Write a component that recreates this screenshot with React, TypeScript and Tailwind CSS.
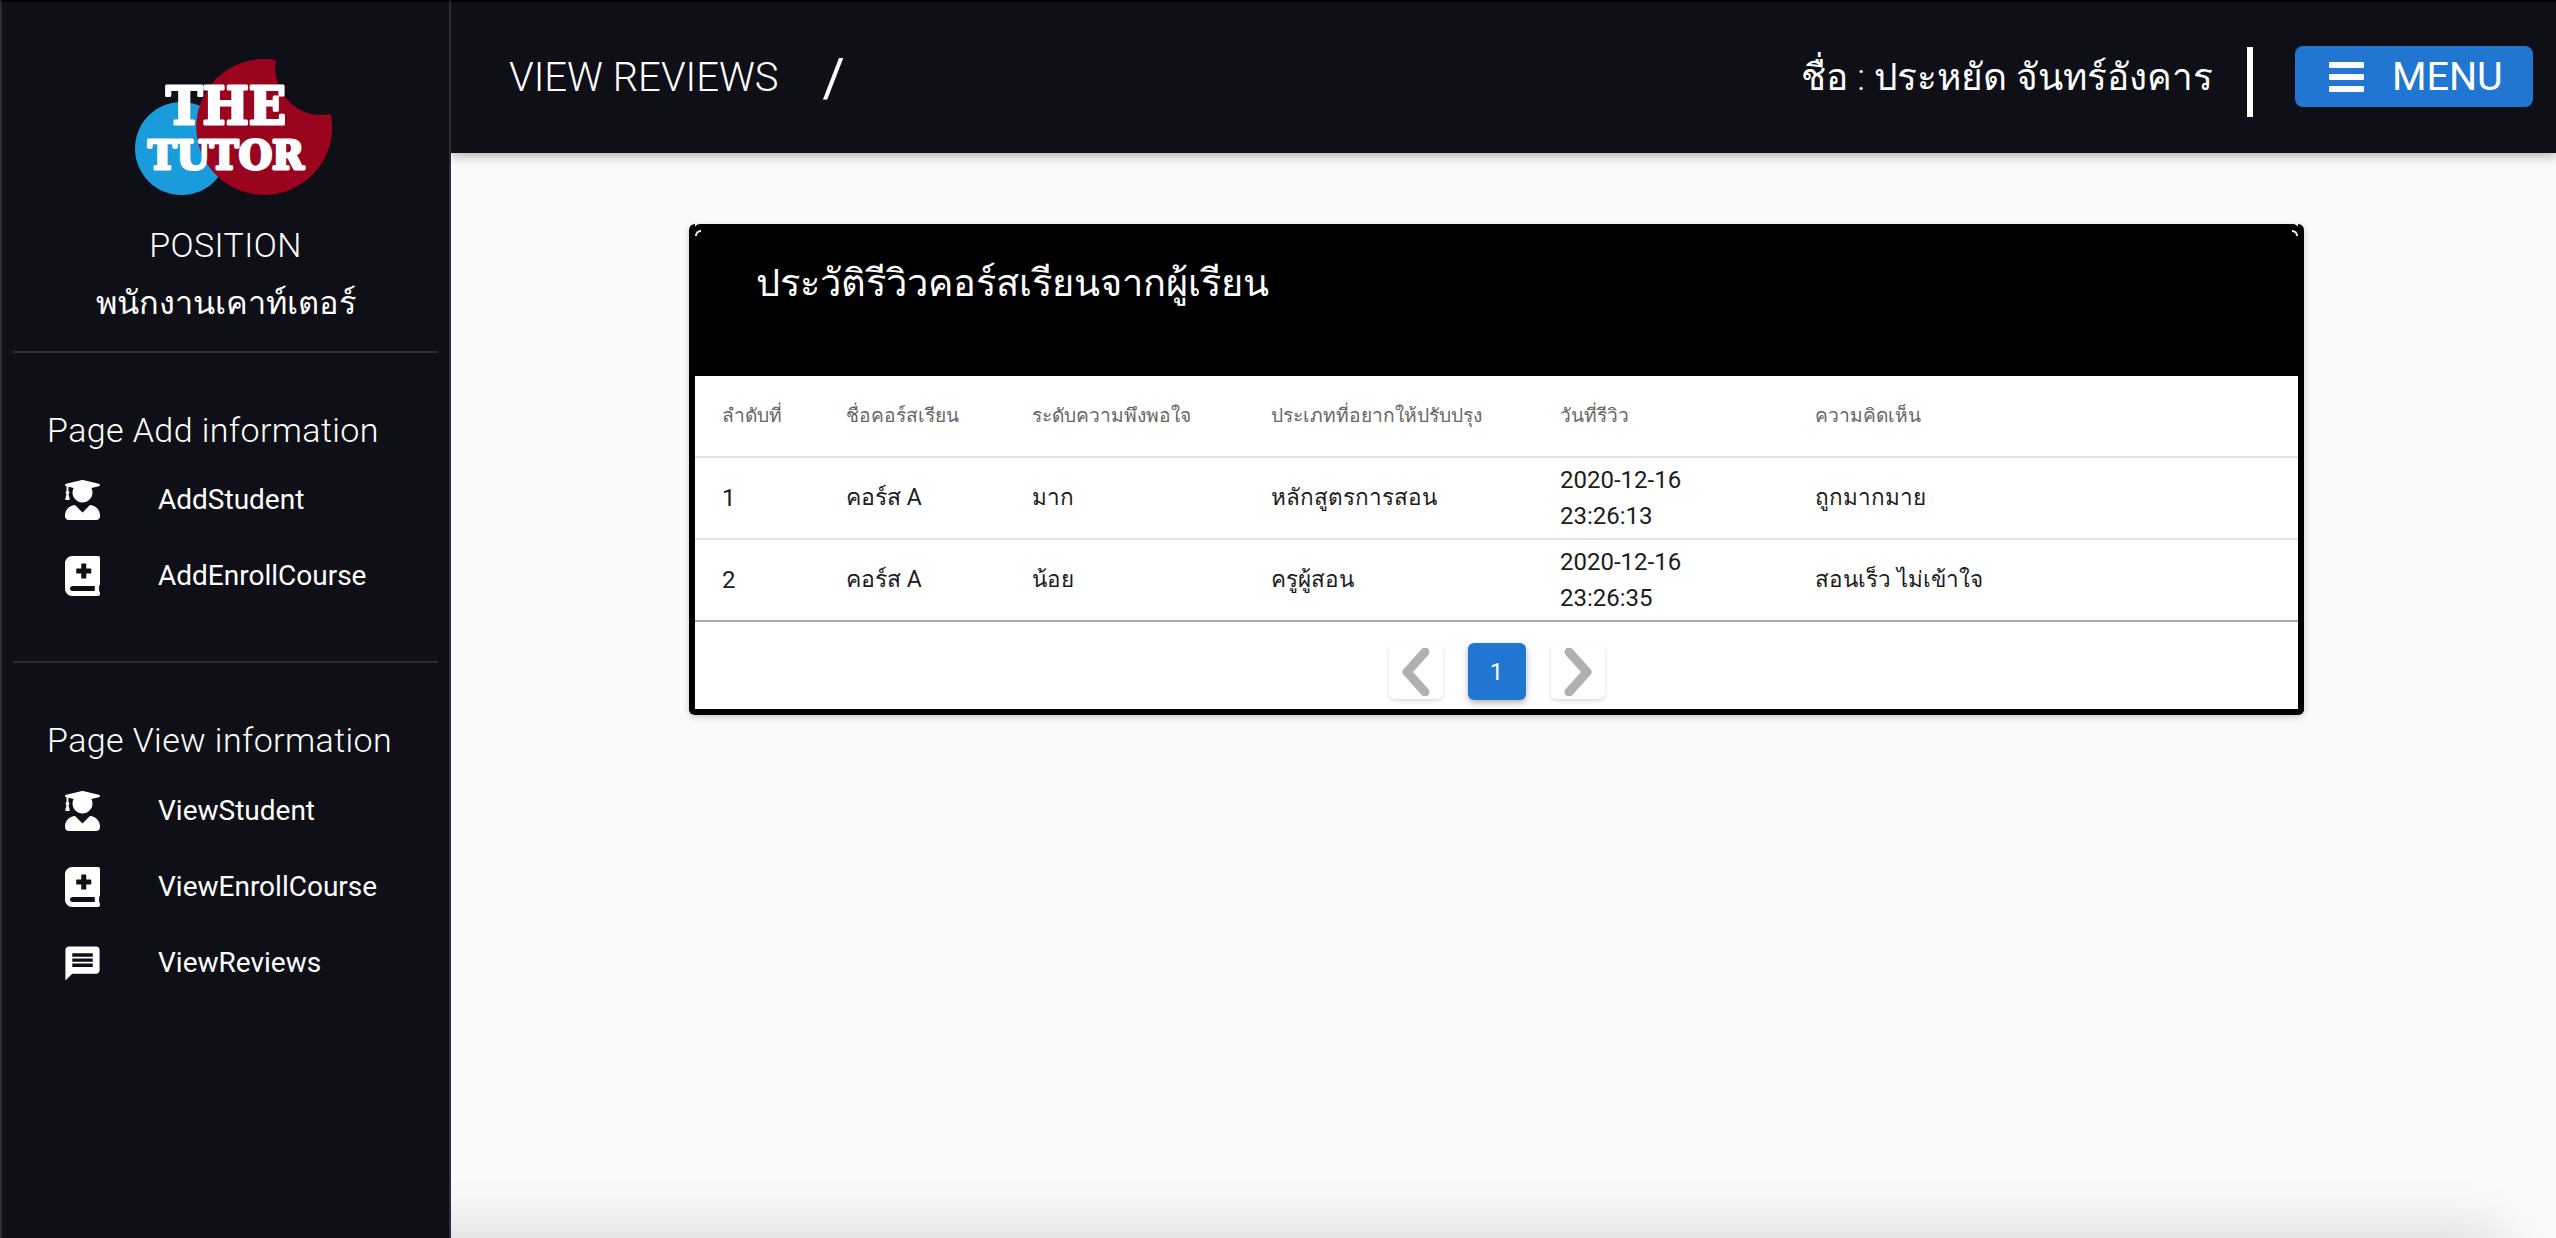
import { FaBookMedical, FaUserGraduate } from 'react-icons/fa'
import { MdMessage } from 'react-icons/md'

const addLinks = [
  { label: 'AddStudent', icon: 'student' },
  { label: 'AddEnrollCourse', icon: 'book' },
]

const viewLinks = [
  { label: 'ViewStudent', icon: 'student' },
  { label: 'ViewEnrollCourse', icon: 'book' },
  { label: 'ViewReviews', icon: 'message' },
]

const reviews = [
  { no: 1, course: 'คอร์ส A', level: 'มาก', type: 'หลักสูตรการสอน', date: '2020-12-16', time: '23:26:13', comment: 'ถูกมากมาย' },
  { no: 2, course: 'คอร์ส A', level: 'น้อย', type: 'ครูผู้สอน', date: '2020-12-16', time: '23:26:35', comment: 'สอนเร็ว ไม่เข้าใจ' },
]

const Logo = () => (
  <svg width="200" height="140" viewBox="0 0 200 140" className="block">
    <circle cx="46.5" cy="91.5" r="46.5" fill="#1a9cdc" />
    <path d="M141 3 A68 68 0 1 0 196 57 C160 64 136 32 141 3 Z" fill="#9b041f" />
    <text x="91" y="67" textAnchor="middle" textLength="120" lengthAdjust="spacingAndGlyphs" fontFamily="'DejaVu Serif', serif" fontWeight="700" fontSize="52" fill="#fff" stroke="#fff" strokeWidth="3" strokeLinejoin="round">THE</text>
    <text x="91" y="112" textAnchor="middle" textLength="156" lengthAdjust="spacingAndGlyphs" fontFamily="'DejaVu Serif', serif" fontWeight="700" fontSize="39" fill="#fff" stroke="#fff" strokeWidth="3" strokeLinejoin="round">TUTOR</text>
  </svg>
)

const NavIcon = ({ name }: { name: string }) => {
  if (name === 'student') return <FaUserGraduate size={40} />
  if (name === 'book') return <FaBookMedical size={40} />
  return <MdMessage size={41} className="shrink-0" />
}

const NavLink = ({ label, icon }: { label: string; icon: string }) => (
  <div className="flex h-[76px] items-center">
    <div className="flex w-[35px] justify-center">
      <NavIcon name={icon} />
    </div>
    <span className="ml-[58px] text-[28px]">{label}</span>
  </div>
)

const Chevron = ({ flip }: { flip?: boolean }) => (
  <svg width="32" height="48" viewBox="0 0 32 48" className={flip ? 'rotate-180' : ''}>
    <path d="M25 4 L7 24 L25 44" fill="none" stroke="#b0b0b0" strokeWidth="9" strokeLinecap="round" strokeLinejoin="round" />
  </svg>
)

export default function App() {
  return (
    <div className="relative flex h-[1238px] w-[2556px] overflow-hidden bg-[#fafafa] font-['Roboto','Noto_Sans_CJK_SC',sans-serif] text-white">
      <aside className="relative z-20 w-[451px] shrink-0 border-x-2 border-t-2 border-x-[#2c2c38] border-t-black bg-[#0f0f17]">
        <div className="flex justify-center pt-[55px] pl-[18px]">
          <Logo />
        </div>
        <div className="mt-[20px] text-center text-[34px] leading-[56px] font-light tracking-[0.4px]">POSITION</div>
        <div className="mt-[2px] text-center text-[32.5px] leading-[56px] font-light">พนักงานเคาท์เตอร์</div>
        <div className="mx-[11px] mt-[20px] h-[2px] bg-[#2c2c38]" />
        <div className="pt-[51px] pl-[45px] text-[34px] leading-[52px] font-light tracking-[0.4px]">Page Add information</div>
        <div className="pl-[63px] pt-[6px]">
          {addLinks.map((l) => (
            <NavLink key={l.label} {...l} />
          ))}
        </div>
        <div className="mx-[11px] mt-[47px] h-[2px] bg-[#2c2c38]" />
        <div className="pt-[51px] pl-[45px] text-[34px] leading-[52px] font-light tracking-[0.4px]">Page View information</div>
        <div className="pl-[63px] pt-[7px]">
          {viewLinks.map((l) => (
            <NavLink key={l.label} {...l} />
          ))}
        </div>
      </aside>

      <div className="flex min-w-0 flex-1 flex-col">
        <header className="z-10 flex h-[153px] items-center border-t-2 border-black bg-[#0f0f17] pr-[23px] pl-[58px] shadow-[0_3px_10px_rgba(0,0,0,0.3)]">
          <span className="text-[40px] font-light">VIEW REVIEWS</span>
          <span className="ml-[44px] text-[54px] font-normal">/</span>
          <span className="ml-auto text-[37px] font-light">ชื่อ : ประหยัด จันทร์อังคาร</span>
          <div className="mt-[8px] ml-[34px] h-[70px] w-[6px] bg-white" />
          <button className="mb-[2px] ml-[42px] flex h-[61px] w-[238px] items-center rounded-lg bg-[#2176d2] pl-[34px] text-[39.5px]">
            <span className="flex h-[30px] w-[35px] flex-col justify-between">
              <span className="h-[6px] rounded-[1px] bg-white" />
              <span className="h-[6px] rounded-[1px] bg-white" />
              <span className="h-[6px] rounded-[1px] bg-white" />
            </span>
            <span className="ml-[28px]">MENU</span>
          </button>
        </header>

        <main className="pt-[71px] pl-[238px]">
          <div className="w-[1615px] rounded-md border-x-[6px] border-b-[6px] border-black bg-white shadow-[0_2px_6px_rgba(0,0,0,0.2)]">
            <div className="relative -mx-[1px] h-[152px] rounded-t-md bg-black pt-[31px] pl-[62px] text-[38px] leading-[56px]">
              <span className="absolute top-[6px] left-[1px] h-[6px] w-[6px] rounded-tl-[6px] border-t-2 border-l-2 border-white" />
              <span className="absolute top-[6px] right-[1px] h-[6px] w-[6px] rounded-tr-[6px] border-t-2 border-r-2 border-white" />
              ประวัติรีวิวคอร์สเรียนจากผู้เรียน
            </div>
            <table className="w-full table-fixed border-collapse text-left text-[24px] text-[#1c1c1c]">
              <colgroup>
                <col className="w-[151px]" />
                <col className="w-[186px]" />
                <col className="w-[239px]" />
                <col className="w-[289px]" />
                <col className="w-[255px]" />
                <col />
              </colgroup>
              <thead>
                <tr className="h-[81px] border-b-2 border-[#e4e4e4] text-[19.2px] text-[#666666]">
                  <th className="pl-[27px] font-medium">ลำดับที่</th>
                  <th className="font-medium">ชื่อคอร์สเรียน</th>
                  <th className="font-medium">ระดับความพึงพอใจ</th>
                  <th className="font-medium">ประเภทที่อยากให้ปรับปรุง</th>
                  <th className="font-medium">วันที่รีวิว</th>
                  <th className="font-medium">ความคิดเห็น</th>
                </tr>
              </thead>
              <tbody>
                {reviews.map((r) => (
                  <tr key={r.no} className="h-[82px] border-b-2 border-[#e4e4e4] last:border-[#a8a8a8]">
                    <td className="pl-[27px]">{r.no}</td>
                    <td className="text-[23px]">{r.course}</td>
                    <td className="text-[22.5px]">{r.level}</td>
                    <td className="text-[22.5px]">{r.type}</td>
                    <td className="leading-[36px]">
                      {r.date}
                      <br />
                      {r.time}
                    </td>
                    <td className="text-[22.5px]">{r.comment}</td>
                  </tr>
                ))}
              </tbody>
            </table>
            <div className="flex h-[87px] items-center justify-center gap-[25px] pt-[12px]">
              <div className="flex h-[55px] w-[54px] items-center justify-center rounded-md bg-white shadow-[0_2px_4px_rgba(0,0,0,0.14)]">
                <Chevron />
              </div>
              <div className="flex h-[57px] w-[58px] items-center justify-center rounded-md bg-[#2176d2] text-[24px] text-white shadow-[0_3px_6px_rgba(0,0,0,0.3)]">
                1
              </div>
              <div className="flex h-[55px] w-[54px] items-center justify-center rounded-md bg-white shadow-[0_2px_4px_rgba(0,0,0,0.14)]">
                <Chevron flip />
              </div>
            </div>
          </div>
        </main>
      </div>

      <div className="absolute top-[1238px] right-[56px] left-0 h-[40px] shadow-[0_0_60px_rgba(0,0,0,0.2)]" />
    </div>
  )
}
